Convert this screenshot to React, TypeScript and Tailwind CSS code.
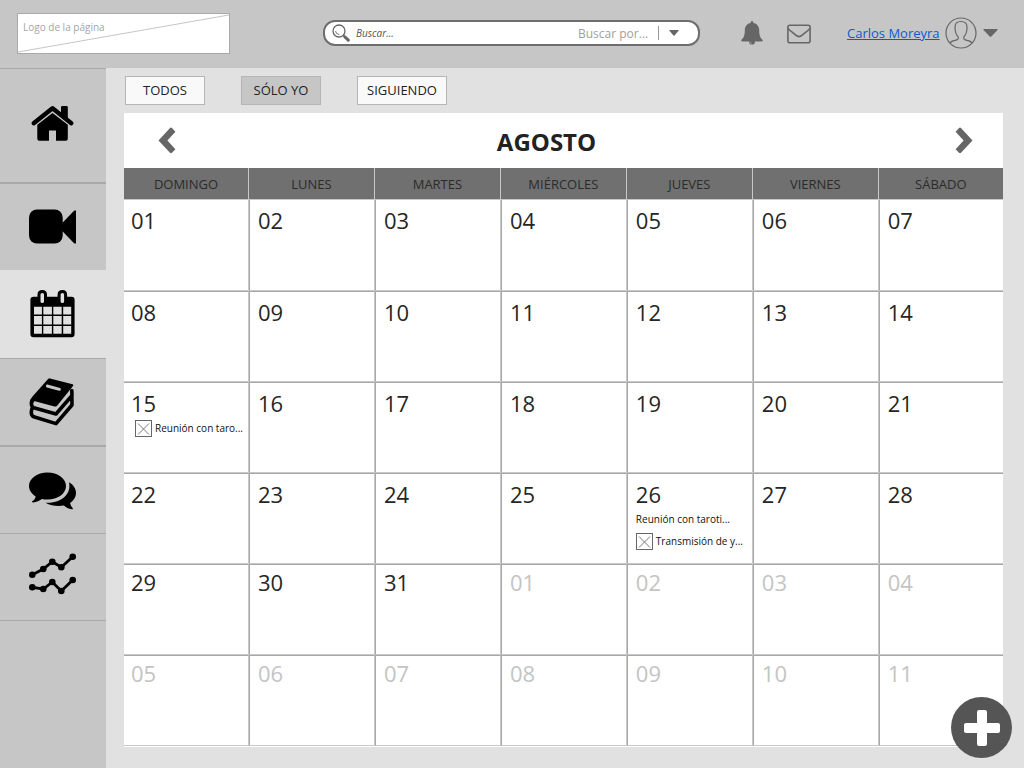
import React from "react";

type DayEvent = { label: string; thumb?: boolean };
type Day = { day: string; outside?: boolean; events?: DayEvent[] };

const WEEKDAYS = ["DOMINGO", "LUNES", "MARTES", "MIÉRCOLES", "JUEVES", "VIERNES", "SÁBADO"];

const EVENTS: Record<number, DayEvent[]> = {
  15: [{ label: "Reunión con taro...", thumb: true }],
  26: [{ label: "Reunión con taroti..." }, { label: "Transmisión de y...", thumb: true }],
};

const WEEKS: Day[][] = Array.from({ length: 6 }, (_, w) =>
  Array.from({ length: 7 }, (_, d) => {
    const n = w * 7 + d + 1;
    const outside = n > 31;
    return {
      day: String(outside ? n - 31 : n).padStart(2, "0"),
      outside,
      events: EVENTS[n],
    };
  })
);

function HomeIcon() {
  return (
    <svg className="size-12" viewBox="0 0 48 48" aria-hidden="true">
      <path d="M4.700 21.200 23.500 6.200 42.300 21.200" fill="none" stroke="#000" strokeWidth="4.400" strokeLinecap="round" strokeLinejoin="round" />
      <path d="M32 5.200q0-1.300 1.300-1.300h4.200q1.300 0 1.300 1.300v12l-6.800-5.400z" />
      <path d="M8.300 22.800 23.500 10.900 38.800 22.800V36.700q0 2-2 2H27V28.400h-7v10.300H10.300q-2 0-2-2z" />
    </svg>
  );
}

function VideoIcon() {
  return (
    <svg className="size-12" viewBox="0 0 48 48" aria-hidden="true">
      <rect x="0" y="6.500" width="33.700" height="34" rx="8" />
      <path d="M33 20.300 44.800 8q2.200-1.600 2.200.8v30.400q0 2.400-2.200.8L33 27.800z" />
    </svg>
  );
}

function CalendarIcon() {
  return (
    <svg className="size-12" viewBox="0 0 48 48" aria-hidden="true">
      <path
        fillRule="evenodd"
        d="M4.500 6.800H8.500V4.500Q8.500 0 13.200 0 18 0 18 4.500V6.800H28.600V4.500Q28.600 0 33.400 0 38.100 0 38.100 4.500V6.800H42.500Q45.600 6.800 45.600 10V44Q45.600 47.200 42.500 47.200H4.500Q1.400 47.200 1.400 44V10Q1.400 6.800 4.500 6.800ZM11.500 4.500V11.500Q11.500 13 13.200 13 15 13 15 11.500V4.500Q15 3 13.200 3 11.500 3 11.500 4.500ZM31.600 4.500V11.500Q31.600 13 33.400 13 35.100 13 35.100 11.500V4.500Q35.100 3 33.400 3 31.600 3 31.600 4.500ZM5 16.700H12.900V24.500H5ZM14.300 16.700H22.900V24.500H14.300ZM24.300 16.700H32.700V24.500H24.300ZM34.200 16.700H42.200V24.500H34.200ZM5 26H12.900V34.500H5ZM14.300 26H22.900V34.500H14.300ZM24.300 26H32.700V34.500H24.300ZM34.200 26H42.200V34.500H34.200ZM5 36H12.900V43.700H5ZM14.300 36H22.900V43.700H14.300ZM24.300 36H32.700V43.700H24.300ZM34.200 36H42.200V43.700H34.200Z"
      />
    </svg>
  );
}

function BooksIcon() {
  return (
    <svg className="size-12" viewBox="0 0 48 48" aria-hidden="true">
      <path
        fillRule="evenodd"
        d="M19.300.8Q20 .1 21 .4L43.600 6.200Q45 6.700 44 8L28.500 27.300Q27.300 28.900 25.500 28.400L6 23.200Q4.500 23 4.200 25L1.200 26.400Q1 21.400 3.500 18.500ZM18.500 6.500Q17.300 6.200 17 7.400 16.500 9 17.800 9.400L30 12.800Q31.200 13.100 31.700 12 32.300 10.400 31 10Z"
      />
      <path
        d="M3 22.400Q1.200 28 4.700 29.700L27 36 43 17.500 42.800 12.500M3 30.400Q1 37 4.700 38.800L27 45.600 43 27 42.800 17"
        fill="none"
        stroke="#000"
        strokeWidth="3.600"
        strokeLinejoin="round"
        strokeLinecap="round"
      />
    </svg>
  );
}

function ChatIcon() {
  return (
    <svg className="size-12" viewBox="0 0 48 48" aria-hidden="true">
      <path d="M18.500 6.400C8.300 6.400 0 12.400 0 20c0 4.200 2.600 7.900 6.700 10.400-.4 1.800-1.300 3.500-3.200 4.700-.9.700-.4 1.500.6 1.400 3.500-.4 6.400-1.700 8.700-3.500 1.800.4 3.700.6 5.700.6C28.700 33.600 37 27.600 37 20S28.700 6.400 18.500 6.400z" />
      <path d="M40 16.200c4.300 2.500 7 6.300 7 10.700 0 4-2.300 7.500-5.900 10 .4 1.900 1.200 3.600 2.400 4.900.8 1 .2 1.700-.8 1.500-3.200-.4-5.700-1.800-7.900-3.700-6.600 1.100-13.300-.1-18.300-2.900C29.300 37.600 43 30 40 16.200z" />
    </svg>
  );
}

const UPPER = [[3.3, 21.7], [14.3, 16], [23.3, 8.7], [32.3, 14.3], [43.7, 3.7]];
const LOWER = [[3.3, 34.3], [14.3, 36], [23.3, 29], [32.3, 38], [43.7, 27]];

function ChartIcon() {
  return (
    <svg className="size-12" viewBox="0 0 48 48" aria-hidden="true">
      {[UPPER, LOWER].map((line, i) => (
        <g key={i}>
          <polyline points={line.map((p) => p.join(",")).join(" ")} fill="none" stroke="#000" strokeWidth="2.800" />
          {line.map(([x, y]) => (
            <circle key={x} cx={x} cy={y} r="3.300" />
          ))}
        </g>
      ))}
    </svg>
  );
}

function Thumb() {
  return (
    <svg className="size-[17px] shrink-0" viewBox="0 0 17 17" fill="none" aria-hidden="true">
      <rect x=".5" y=".5" width="16" height="16" stroke="#666" />
      <path d="M3 3.500 14 14.500M14 3.500 3 14.500" stroke="#777" strokeWidth="1" />
    </svg>
  );
}

function Chevron({ flip = false }: { flip?: boolean }) {
  return (
    <svg className="h-[27px] w-[18px]" viewBox="0 0 18 27" aria-hidden="true">
      <path
        d={
          flip
            ? "M.6 4.800 4 1Q5 .2 6 1.100L17.500 13.400 6 25.800Q5 26.700 4 25.800L.6 22.200 8.600 13.400Z"
            : "M17.400 4.800 14 1Q13 .2 12 1.100L.5 13.400 12 25.800Q13 26.700 14 25.800L17.400 22.200 9.400 13.400Z"
        }
        fill="#666"
      />
    </svg>
  );
}

const NAV = [
  { label: "Inicio", icon: <HomeIcon />, style: "h-[116px] border-t border-b-2" },
  { label: "Videos", icon: <VideoIcon />, style: "h-[86px]" },
  { label: "Calendario", icon: <CalendarIcon />, style: "h-[89px] border-b bg-[#e1e1e1]" },
  { label: "Biblioteca", icon: <BooksIcon />, style: "h-[88px] border-b-2" },
  { label: "Mensajes", icon: <ChatIcon />, style: "h-[87px] border-b" },
  { label: "Estadísticas", icon: <ChartIcon />, style: "h-[87px] border-b" },
];

const FILTERS = [
  { label: "TODOS", style: "w-20 bg-[#f9f9f9]" },
  { label: "SÓLO YO", style: "w-20 bg-[#c6c6c6]" },
  { label: "SIGUIENDO", style: "w-[90px] bg-[#f9f9f9]" },
];

function Header() {
  return (
    <header className="flex h-[68px] items-center bg-[#c6c6c6] pr-[26px] pb-0.5 pl-[17px]">
      <a href="#inicio" className="relative h-[41px] w-[213px] shrink-0 border border-[#a9a9a9] bg-white">
        <svg className="absolute inset-0 h-full w-full" viewBox="0 0 211 39" preserveAspectRatio="none" aria-hidden="true">
          <path d="M0 38 211 1" stroke="#c6c6c6" strokeWidth="1.200" />
        </svg>
        <span className="relative block pt-1 pl-[5px] text-[10px] leading-[18px] text-[#a5a5a5]">Logo de la página</span>
      </a>

      <form className="mr-[41px] ml-[93px] flex h-[26px] min-w-0 flex-1 items-center rounded-xl border-2 border-[#6e6e6e] bg-white pl-[7px]">
        <svg className="size-[18px] shrink-0" viewBox="0 0 18 18" fill="none" aria-hidden="true">
          <circle cx="7" cy="7" r="6" stroke="#666" strokeWidth="1.300" />
          <path d="M3.500 7Q4 10.300 7.300 10.500" stroke="#777" strokeWidth="1" />
          <path d="m11.300 11.300 1.500 1.500" stroke="#666" strokeWidth="1.500" />
          <path d="m12.800 12.800 3.500 3.300" stroke="#666" strokeWidth="3" strokeLinecap="round" />
        </svg>
        <input
          type="search"
          aria-label="Buscar"
          placeholder="Buscar..."
          className="ml-1.5 min-w-0 flex-1 bg-transparent text-[10px] leading-5 italic outline-none placeholder:text-[#555]"
        />
        <div className="relative flex h-full w-[120px] shrink-0 items-center">
          <select
            aria-label="Buscar por"
            className="h-full w-full appearance-none bg-transparent pt-0.5 text-[12px] leading-5 text-[#a0a0a0] outline-none"
          >
            <option>Buscar por...</option>
          </select>
          <span className="pointer-events-none absolute inset-y-0 right-[19px] flex items-center gap-2.5">
            <span className="h-3.5 w-px bg-[#999]" />
            <svg className="h-1.5 w-2.5" viewBox="0 0 10 6" aria-hidden="true">
              <path d="M.5 0h9Q10 .3 9.600.8L5.500 5.600Q5 6 4.500 5.600L.4.800Q0 .3.500 0z" fill="#666" />
            </svg>
          </span>
        </div>
      </form>

      <div className="flex shrink-0 items-center">
        <button type="button" aria-label="Notificaciones">
          <svg className="h-6 w-[22px]" viewBox="0 0 22 24" aria-hidden="true">
            <path
              d="M11 0q1.300 0 1.300 1.400v.6c3.700.6 5.900 3.500 5.900 7.200 0 5.300 1.300 7.900 3.600 9.800q.2.800-.8 1.400H14q-.2 3.200-3 3.200t-3-3.200H1q-1-.6-.8-1.400c2.300-1.900 3.600-4.500 3.600-9.800C3.800 5.500 6 2.600 9.700 2v-.6Q9.700 0 11 0z"
              fill="#666"
            />
            <path d="M9 20.700q.2 1.500 1.700 1.800" fill="none" stroke="#b5b5b5" strokeWidth=".7" />
          </svg>
        </button>
        <button type="button" aria-label="Correo" className="ml-6">
          <svg className="mt-0.5 h-5 w-6" viewBox="0 0 24 20" fill="none" aria-hidden="true">
            <rect x=".9" y="1.200" width="22.200" height="17.600" rx="2" stroke="#666" strokeWidth="1.600" />
            <path d="M1 4.500C3.500 7 6 8.800 8.800 11.200q3.200 2.700 6.400 0C18 8.800 20.500 7 23 4.500" stroke="#666" strokeWidth="1.600" />
          </svg>
        </button>
        <a href="#perfil" className="ml-9 w-[93px] text-[13px] leading-5 whitespace-nowrap text-[#0a5bd0] underline">
          Carlos Moreyra
        </a>
        <button type="button" aria-label="Menú de usuario" className="ml-[5px] flex items-center gap-1.5">
          <svg className="size-8" viewBox="0 0 32 32" fill="none" stroke="#666" strokeWidth="1.200" aria-hidden="true">
            <circle cx="16" cy="16" r="15" />
            <path d="M5 26.200Q6 24 10 23.400c3-.5 3.800-1.500 3-3.900C10.800 17.500 10 14 10 10c0-4 2.300-5.500 6-5.500s6 1.500 6 5.500c0 4-.8 7.500-3 9.500-.8 2.400 0 3.400 3 3.900q4 .6 5 2.800" />
          </svg>
          <svg className="h-2 w-[15px]" viewBox="0 0 15 8" aria-hidden="true">
            <path d="M.8 0h13.400Q15 .3 14.500 1L8.300 7.400Q7.500 8 6.700 7.400L.5 1Q0 .3.800 0z" fill="#666" />
          </svg>
        </button>
      </div>
    </header>
  );
}

function Calendar() {
  return (
    <section className="mt-2 bg-white pb-px" aria-label="Agosto">
      <div className="flex h-[55px] items-center pr-[30px] pl-[34px]">
        <button type="button" aria-label="Mes anterior">
          <Chevron />
        </button>
        <h1 className="flex-1 pt-0.5 pr-[38px] text-center text-2xl font-bold text-[#222]">AGOSTO</h1>
        <button type="button" aria-label="Mes siguiente">
          <Chevron flip />
        </button>
      </div>
      <table className="w-full table-fixed border-separate border-spacing-0">
        <colgroup>
          <col className="w-[14.22%]" />
          <col className="w-[14.33%]" />
          <col className="w-[14.33%]" />
          <col className="w-[14.33%]" />
          <col className="w-[14.33%]" />
          <col className="w-[14.33%]" />
          <col />
        </colgroup>
        <thead>
          <tr className="h-8">
            {WEEKDAYS.map((name) => (
              <th
                key={name}
                className="border-r border-b border-[#c8c8c8] bg-[#707070] p-0 text-center text-[13px] leading-5 font-normal text-[#2b2b2b] last:border-r-0"
              >
                {name}
              </th>
            ))}
          </tr>
        </thead>
        <tbody>
          {WEEKS.map((week, w) => (
            <tr key={w} className="group h-[91px]">
              {week.map((cell, d) => (
                <td
                  key={cell.day}
                  className={`border-t border-r border-b border-l border-t-[#a8a8a8] border-r-[#c8c8c8] border-b-[#c8c8c8] border-l-[#a8a8a8] pr-0 pb-0 pl-2 align-top group-first:border-t-0 first:border-l-0 first:pl-[7px] last:border-r-0 ${
                    w < 4 ? "pt-2" : "pt-[5px]"
                  }`}
                >
                  <div className={`text-[22px] leading-6 ${cell.outside ? "text-[#c4c4c4]" : "text-[#262626]"}`}>{cell.day}</div>
                  {cell.events && (
                    <ul className={d === 0 ? "pt-0.5 pl-1" : "pt-0.5"}>
                      {cell.events.map((event) => (
                        <li key={event.label} className="flex h-[22px] items-center gap-[3px] text-[10px] leading-4 whitespace-nowrap text-[#111]">
                          {event.thumb && <Thumb />}
                          {event.label}
                        </li>
                      ))}
                    </ul>
                  )}
                </td>
              ))}
            </tr>
          ))}
        </tbody>
      </table>
    </section>
  );
}

export default function App() {
  return (
    <div className="flex min-h-screen flex-col bg-[#e1e1e1] font-['Open_Sans',sans-serif]">
      <Header />
      <div className="flex flex-1">
        <nav className="w-[106px] shrink-0 bg-[#c6c6c6]" aria-label="Principal">
          {NAV.map((item) => (
            <a
              key={item.label}
              href="#seccion"
              aria-label={item.label}
              className={`flex items-center justify-center border-[#a9a9a9] ${item.style}`}
            >
              {item.icon}
            </a>
          ))}
        </nav>
        <main className="min-w-0 flex-1 pt-2 pr-[21px] pl-[18px]">
          <div className="flex gap-9 pl-px">
            {FILTERS.map((filter) => (
              <button
                key={filter.label}
                type="button"
                className={`h-[29px] border border-[#b5b5b5] pb-0.5 text-[13px] leading-5 text-[#222] ${filter.style}`}
              >
                {filter.label}
              </button>
            ))}
          </div>
          <Calendar />
        </main>
      </div>
      <button
        type="button"
        aria-label="Añadir evento"
        className="fixed right-3 bottom-2.5 flex size-[61px] items-center justify-center rounded-full bg-[#555]"
      >
        <svg className="size-9" viewBox="0 0 36 36" aria-hidden="true">
          <path
            d="M15 0h6q2 0 2 2v11h11q2 0 2 2v6q0 2-2 2H23v11q0 2-2 2h-6q-2 0-2-2V23H2q-2 0-2-2v-6q0-2 2-2h11V2q0-2 2-2z"
            fill="#fff"
          />
        </svg>
      </button>
    </div>
  );
}
